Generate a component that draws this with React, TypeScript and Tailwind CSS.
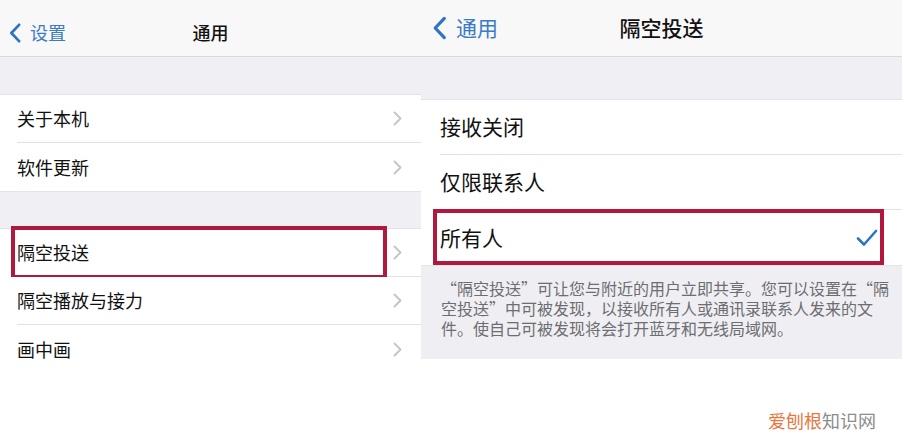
const font = { fontFamily: '"Noto Sans CJK SC", "Noto Sans", sans-serif' };

function Chevron() {
  return (
    <svg width="9" height="15" viewBox="0 0 9 15" className="shrink-0">
      <polyline points="1.5,1.5 7.5,7.5 1.5,13.5" fill="none" stroke="#c4c4c8" strokeWidth="1.8" strokeLinecap="round" strokeLinejoin="round" />
    </svg>
  );
}

function Back({ label, big }: { label: string; big?: boolean }) {
  return (
    <div className={`flex items-center ${big ? 'gap-[9px] pl-[11px] text-[21px]' : 'gap-[8px] pl-[8px] text-[18px]'} text-[#3a7bc6]`}>
      <svg width={big ? 15 : 14} height={big ? 24 : 20} viewBox="0 0 14 22">
        <polyline points="11.5,2 3,11 11.5,20" fill="none" stroke="#2f74c4" strokeWidth="3" strokeLinecap="round" strokeLinejoin="round" />
      </svg>
      <span>{label}</span>
    </div>
  );
}

function LeftRow({ label, last, marked }: { label: string; last?: boolean; marked?: boolean }) {
  return (
    <div className="relative flex h-[48px] items-center bg-white pl-[17px]">
      <div className={`flex h-full flex-1 items-center justify-between pr-[19px] ${last ? '' : 'border-b border-[#e2e2e5]'}`}>
        <span className="text-[18px] text-[#111]">{label}</span>
        <Chevron />
      </div>
      {marked && (
        <div className="absolute left-[11px] top-[-3px] h-[53px] w-[376px] border-4 border-[#b2183e]" />
      )}
    </div>
  );
}

function RightRow({ label, last, checked }: { label: string; last?: boolean; checked?: boolean }) {
  return (
    <div className="relative flex h-[55px] items-center bg-white pl-[19px]">
      <div className={`flex h-full flex-1 items-center justify-between pr-[24px] ${last ? '' : 'border-b border-[#e2e2e5]'}`}>
        <span className="text-[21px] text-[#111]">{label}</span>
        {checked && (
          <svg width="22" height="18" viewBox="0 0 22 18">
            <polyline points="2,9.5 8,15.5 20,2" fill="none" stroke="#2f74c4" strokeWidth="2.6" strokeLinecap="round" strokeLinejoin="round" />
          </svg>
        )}
      </div>
      {checked && (
        <div className="absolute left-[12px] top-[-1px] h-[56px] w-[451px] border-4 border-[#b2183e]" />
      )}
    </div>
  );
}

export default function App() {
  return (
    <div className="relative flex h-[439px] w-[902px] overflow-hidden bg-white" style={font}>
      {/* 左：通用 */}
      <div className="w-[421px] shrink-0">
        <div className="grid h-[57px] grid-cols-[1fr_auto_1fr] items-center border-b border-[#d9d9dc] bg-[#f8f8f9] pt-[9px]">
          <Back label="设置" />
          <span className="text-[18px] font-medium text-[#111]">通用</span>
          <span />
        </div>
        <div className="h-[38px] border-b border-[#e4e4e7] bg-[#f0f0f4]" />
        <LeftRow label="关于本机" />
        <LeftRow label="软件更新" last />
        <div className="h-[38px] border-y border-[#e4e4e7] bg-[#f0f0f4]" />
        <LeftRow label="隔空投送" marked />
        <LeftRow label="隔空播放与接力" />
        <LeftRow label="画中画" last />
      </div>

      {/* 右：隔空投送 */}
      <div className="flex-1">
        <div className="grid h-[57px] grid-cols-[1fr_auto_1fr] items-center border-b border-[#d9d9dc] bg-[#f8f8f9]">
          <Back label="通用" big />
          <span className="text-[21px] font-medium text-[#111]">隔空投送</span>
          <span />
        </div>
        <div className="h-[43px] border-b border-[#e4e4e7] bg-[#f0f0f4]" />
        <RightRow label="接收关闭" />
        <RightRow label="仅限联系人" />
        <RightRow label="所有人" checked last />
        <div className="h-[94px] border-t border-[#e4e4e7] bg-[#efeff3] pl-[20px] pt-[12px] text-[16px] leading-[20px] text-[#6d6d72]">
          <p className="whitespace-nowrap">“隔空投送”可让您与附近的用户立即共享。您可以设置在“隔</p>
          <p className="whitespace-nowrap">空投送”中可被发现，以接收所有人或通讯录联系人发来的文</p>
          <p className="whitespace-nowrap">件。使自己可被发现将会打开蓝牙和无线局域网。</p>
        </div>
      </div>

      <div className="absolute bottom-[7px] right-[26px] text-[18px] leading-[24px]">
        <span className="text-[#e8773f]">爱刨根</span>
        <span className="text-[#8c8c8c]">知识网</span>
      </div>
    </div>
  );
}
